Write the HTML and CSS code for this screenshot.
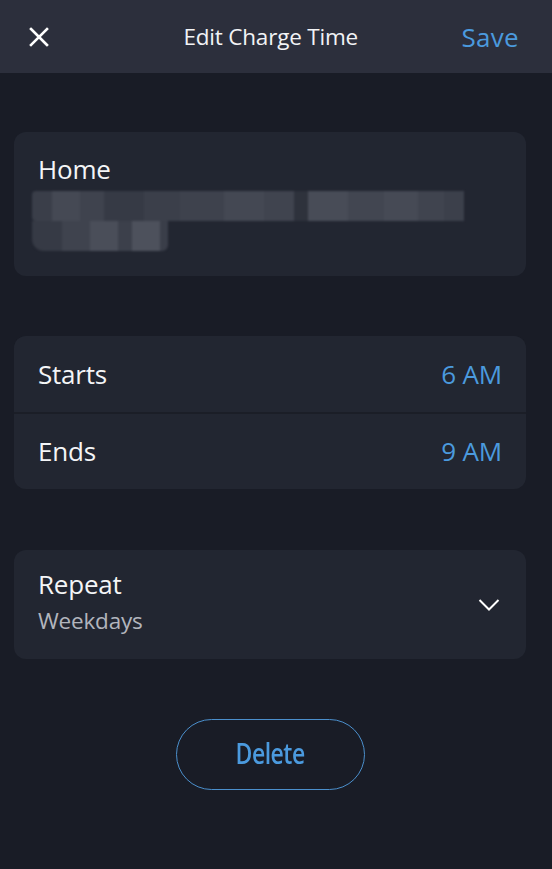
FILE: index.html
```html
<!DOCTYPE html>
<html>
<head>
<meta charset="utf-8">
<link rel="stylesheet" href="styles.css">
</head>
<body>
<header class="topbar">
  <button class="icon-btn close" aria-label="Close">
    <svg width="20" height="20" viewBox="0 0 20 20"><path d="M2 2 L18 18 M18 2 L2 18" stroke="#fff" stroke-width="2.6" stroke-linecap="square" fill="none"/></svg>
  </button>
  <h1 class="title">Edit Charge Time</h1>
  <button class="save">Save</button>
</header>
<main class="content">
  <section class="card location">
    <div class="label">Home</div>
    <div class="redacted">
      <div class="red-row r1">
        <span class="b" style="width:20px;background:#3a3e49"></span>
        <span class="b" style="width:28px;background:#454954"></span>
        <span class="b" style="width:24px;background:#3f434e"></span>
        <span class="b" style="width:40px;background:#363a45"></span>
        <span class="b" style="width:36px;background:#3b3f4a"></span>
        <span class="b" style="width:44px;background:#3e424d"></span>
        <span class="b" style="width:40px;background:#444853"></span>
        <span class="b" style="width:30px;background:#40444f"></span>
        <span class="b" style="width:14px;background:#2e323c"></span>
        <span class="b" style="width:40px;background:#484c57"></span>
        <span class="b" style="width:36px;background:#424651"></span>
        <span class="b" style="width:34px;background:#464a55"></span>
        <span class="b" style="width:26px;background:#40444f"></span>
        <span class="b" style="width:20px;background:#3c404b"></span>
      </div>
      <div class="red-row r2">
        <span class="b" style="width:30px;background:#363a45"></span>
        <span class="b" style="width:28px;background:#3f434e"></span>
        <span class="b" style="width:28px;background:#4a4e59"></span>
        <span class="b" style="width:14px;background:#3c404b"></span>
        <span class="b" style="width:28px;background:#4d515c"></span>
        <span class="b" style="width:8px;background:#3a3e49"></span>
      </div>
    </div>
  </section>

  <section class="card group">
    <div class="row">
      <span class="row-label">Starts</span>
      <span class="row-value">6 AM</span>
    </div>
    <div class="row">
      <span class="row-label">Ends</span>
      <span class="row-value">9 AM</span>
    </div>
  </section>

  <section class="card repeat">
    <div class="repeat-text">
      <div class="row-label">Repeat</div>
      <div class="sub">Weekdays</div>
    </div>
    <svg class="chev" width="22" height="14" viewBox="0 0 22 14"><path d="M1.5 2 L11 11.5 L20.5 2" stroke="#fff" stroke-width="2" fill="none"/></svg>
  </section>

  <div class="actions">
    <button class="delete"><span class="delete-text">Delete</span></button>
  </div>
</main>
</body>
</html>
```

FILE: styles.css
```css
* { box-sizing: border-box; }
html, body {
  margin: 0;
  padding: 0;
  background: #191c26;
  font-family: "Open Sans", "Noto Sans", sans-serif;
  color: #fff;
  width: 552px;
  height: 869px;
  overflow: hidden;
}
.topbar {
  height: 73px;
  background: #2c2f3c;
  display: flex;
  align-items: center;
  padding: 0 33px 0 28px;
  justify-content: space-between;
}
.icon-btn {
  background: none;
  border: 0;
  padding: 0;
  width: 22px;
  height: 22px;
  display: flex;
  align-items: center;
  justify-content: center;
}
.title {
  margin: 0 0 0 30px;
  font-size: 22.5px;
  font-weight: 400;
  letter-spacing: -0.2px;
  color: #f2f3f5;
}
.save {
  background: none;
  border: 0;
  padding: 0;
  font-family: inherit;
  font-size: 26px;
  color: #4b9ade;
  letter-spacing: 0.3px;
}
.content {
  padding: 59px 26px 0 14px;
  display: flex;
  flex-direction: column;
}
.card {
  background: #222631;
  border-radius: 12px;
  width: 512px;
}
.location {
  height: 144px;
  padding: 19px 24px 0 24px;
}
.label {
  font-size: 26px;
  color: #f4f5f7;
  line-height: 36px;
  letter-spacing: -0.2px;
}
.redacted {
  margin-top: 4px;
  margin-left: -6px;
  filter: blur(1.2px);
}
.red-row { display: flex; height: 30px; }
.red-row .b { display: block; height: 100%; }
.r1 { border-radius: 4px 10px 12px 4px; overflow: hidden; }
.r2 { border-radius: 0 0 6px 12px; overflow: hidden; width: 136px; }
.group {
  margin-top: 60px;
  height: 153px;
  display: flex;
  flex-direction: column;
  background: #1b1e27;
  gap: 2px;
  overflow: hidden;
}
.row {
  flex: 1;
  background: #222631;
  display: flex;
  align-items: center;
  justify-content: space-between;
  padding: 0 24px;
}
.row-label {
  font-size: 26px;
  color: #f4f5f7;
  letter-spacing: -0.2px;
}
.row-value {
  font-size: 26px;
  color: #4b9ade;
  letter-spacing: -0.2px;
}
.repeat {
  margin-top: 61px;
  height: 109px;
  display: flex;
  align-items: center;
  justify-content: space-between;
  padding: 0 26px 0 24px;
}
.repeat-text { display: flex; flex-direction: column; margin-top: -3px; }
.repeat .row-label { line-height: 36px; }
.sub {
  font-size: 22.5px;
  color: #b2b5bd;
  line-height: 38px;
  letter-spacing: -0.2px;
}
.actions {
  display: flex;
  justify-content: center;
  margin-top: 60px;
}
.delete {
  width: 189px;
  height: 71px;
  border-radius: 36px;
  border: 1.5px solid #4b8fcc;
  background: transparent;
  color: #4b9ade;
  font-family: "Open Sans", sans-serif;
  font-size: 28px;
  font-weight: 600;
  display: flex;
  align-items: center;
  justify-content: center;
  padding-bottom: 4px;
}
.delete-text {
  display: inline-block;
  transform: scaleX(0.82);
  letter-spacing: -0.6px;
}
```
